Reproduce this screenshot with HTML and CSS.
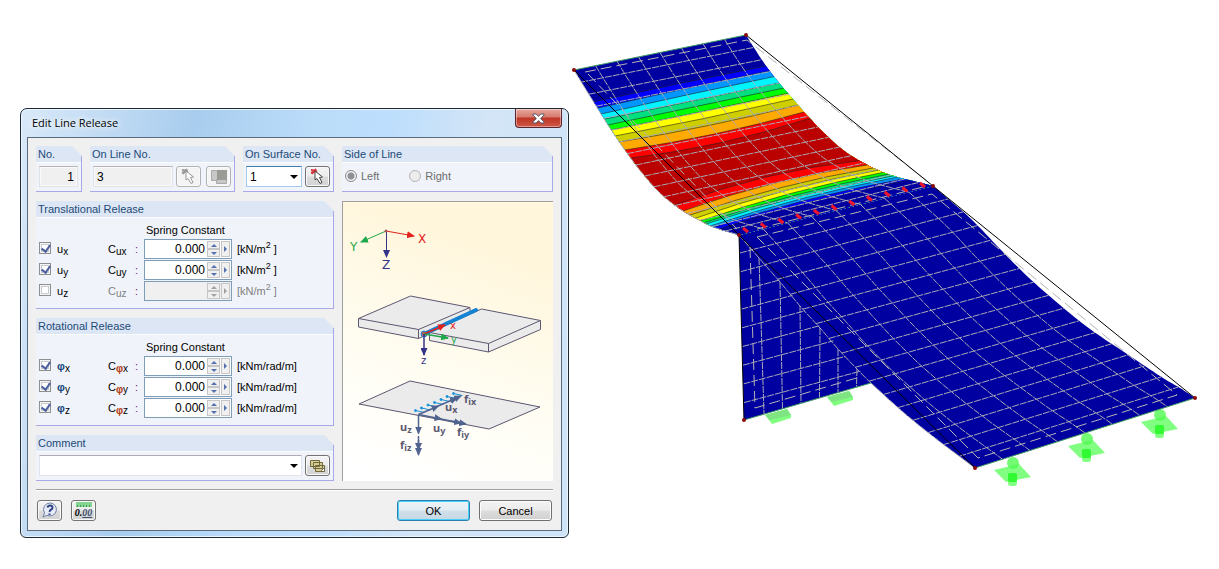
FILE: index.html
```html
<!DOCTYPE html>
<html lang="en">
<head>
    <meta charset="UTF-8">
    <meta name="viewport" content="width=device-width, initial-scale=1.0">
    <title>Edit Line Release</title>
    <link rel="stylesheet" href="styles.css">
</head>
<body>
    <main class="workspace">
        <section class="dialog">
            <header class="titlebar">
                <h1>Edit Line Release</h1>
                <button class="close-button" aria-label="Close">
                    <svg width="13" height="11" viewBox="0 0 13 11">
                        <path d="M1 1h3.200l2.300 2.400L8.800 1H12v1.200L8.600 5.500 12 8.800V10H8.800L6.500 7.600 4.200 10H1V8.800l3.400-3.300L1 2.200z" fill="#fff" stroke="#54586b"/>
                    </svg>
                </button>
            </header>

            <form class="client" onsubmit="return false">
                <div class="top-row">
                    <div class="panel">
                        <h2><label for="releaseNo">No.</label></h2>
                        <div class="panel-body fields">
                            <input class="text-field number" type="text" id="releaseNo" value="1" readonly>
                        </div>
                    </div>
                    <div class="panel">
                        <h2><label for="lineNo">On Line No.</label></h2>
                        <div class="panel-body fields">
                            <input class="text-field" type="text" id="lineNo" value="3" readonly>
                            <button class="icon-button" aria-label="Pick line" disabled>
                                <svg width="19" height="17" viewBox="0 0 19 17">
                                    <path d="M3 2l5 1M8 1L4 6M3 5l6-2" stroke="#999" stroke-width="2" fill="none"/>
                                    <path d="M7 3v9l2-1.500 3 5 2-1-2.500-5 3-.5z" fill="#fff" stroke="#999"/>
                                </svg>
                            </button>
                            <button class="icon-button spaced" aria-label="Line list" disabled>
                                <svg width="19" height="17" viewBox="0 0 19 17">
                                    <path d="M2.500 2.500h6v10h-6zM7.500 11.500h10v4h-10z" fill="#c8c8c8" stroke="#aaa"/>
                                    <path d="M8 2h10v10H8z" fill="#9b9b95"/>
                                </svg>
                            </button>
                        </div>
                    </div>
                    <div class="panel">
                        <h2><label for="surfaceNo">On Surface No.</label></h2>
                        <div class="panel-body fields">
                            <div class="drop-down focused">
                                <select id="surfaceNo"><option>1</option><option>2</option></select>
                            </div>
                            <button class="icon-button" aria-label="Pick surface">
                                <svg width="19" height="17" viewBox="0 0 19 17">
                                    <path d="M3 2l5 1M8 1L4 6M3 5l6-2" stroke="#d8363e" stroke-width="2" fill="none"/>
                                    <path d="M7 3v9l2-1.500 3 5 2-1-2.500-5 3-.5z" fill="#fff" stroke="#444"/>
                                </svg>
                            </button>
                        </div>
                    </div>
                    <div class="panel">
                        <h2>Side of Line</h2>
                        <div class="panel-body radios">
                            <label><input type="radio" name="side" checked disabled>Left</label>
                            <label><input type="radio" name="side" disabled>Right</label>
                        </div>
                    </div>
                </div>

                <div class="main-row">
                    <div class="settings">
                        <div class="panel release">
                            <h2>Translational Release</h2>
                            <div class="panel-body">
                                <p class="column-title">Spring Constant</p>
                                <div class="spring-row">
                                    <input type="checkbox" id="ux" checked>
                                    <label for="ux">u<sub>x</sub></label>
                                    <label for="cux">C<sub>ux</sub></label>
                                    <span class="colon">:</span>
                                    <div class="spinner">
                                        <input type="text" id="cux" value="0.000">
                                        <div class="steps"><button aria-label="Increase"></button><button aria-label="Decrease"></button></div>
                                        <button class="more" aria-label="More"></button>
                                    </div>
                                    <span class="unit">[kN/m<sup>2</sup> ]</span>
                                </div>
                                <div class="spring-row">
                                    <input type="checkbox" id="uy" checked>
                                    <label for="uy">u<sub>y</sub></label>
                                    <label for="cuy">C<sub>uy</sub></label>
                                    <span class="colon">:</span>
                                    <div class="spinner">
                                        <input type="text" id="cuy" value="0.000">
                                        <div class="steps"><button aria-label="Increase"></button><button aria-label="Decrease"></button></div>
                                        <button class="more" aria-label="More"></button>
                                    </div>
                                    <span class="unit">[kN/m<sup>2</sup> ]</span>
                                </div>
                                <div class="spring-row inactive">
                                    <input type="checkbox" id="uz">
                                    <label for="uz">u<sub>z</sub></label>
                                    <label for="cuz">C<sub>uz</sub></label>
                                    <span class="colon">:</span>
                                    <div class="spinner">
                                        <input type="text" id="cuz" disabled>
                                        <div class="steps"><button aria-label="Increase" disabled></button><button aria-label="Decrease" disabled></button></div>
                                        <button class="more" aria-label="More" disabled></button>
                                    </div>
                                    <span class="unit">[kN/m<sup>2</sup> ]</span>
                                </div>
                            </div>
                        </div>

                        <div class="panel release">
                            <h2>Rotational Release</h2>
                            <div class="panel-body">
                                <p class="column-title">Spring Constant</p>
                                <div class="spring-row">
                                    <input type="checkbox" id="phix" checked>
                                    <label for="phix"><span class="phi">φ</span><sub>x</sub></label>
                                    <label for="cphix">C<sub><span class="phi-sub">φ</span>x</sub></label>
                                    <span class="colon">:</span>
                                    <div class="spinner">
                                        <input type="text" id="cphix" value="0.000">
                                        <div class="steps"><button aria-label="Increase"></button><button aria-label="Decrease"></button></div>
                                        <button class="more" aria-label="More"></button>
                                    </div>
                                    <span class="unit">[kNm/rad/m]</span>
                                </div>
                                <div class="spring-row">
                                    <input type="checkbox" id="phiy" checked>
                                    <label for="phiy"><span class="phi">φ</span><sub>y</sub></label>
                                    <label for="cphiy">C<sub><span class="phi-sub">φ</span>y</sub></label>
                                    <span class="colon">:</span>
                                    <div class="spinner">
                                        <input type="text" id="cphiy" value="0.000">
                                        <div class="steps"><button aria-label="Increase"></button><button aria-label="Decrease"></button></div>
                                        <button class="more" aria-label="More"></button>
                                    </div>
                                    <span class="unit">[kNm/rad/m]</span>
                                </div>
                                <div class="spring-row">
                                    <input type="checkbox" id="phiz" checked>
                                    <label for="phiz"><span class="phi">φ</span><sub>z</sub></label>
                                    <label for="cphiz">C<sub><span class="phi-sub">φ</span>z</sub></label>
                                    <span class="colon">:</span>
                                    <div class="spinner">
                                        <input type="text" id="cphiz" value="0.000">
                                        <div class="steps"><button aria-label="Increase"></button><button aria-label="Decrease"></button></div>
                                        <button class="more" aria-label="More"></button>
                                    </div>
                                    <span class="unit">[kNm/rad/m]</span>
                                </div>
                            </div>
                        </div>

                        <div class="panel">
                            <h2><label for="comment">Comment</label></h2>
                            <div class="panel-body fields">
                                <div class="drop-down">
                                    <select id="comment"><option></option></select>
                                </div>
                                <button class="icon-button" aria-label="Comment library">
                                    <svg width="19" height="17" viewBox="0 0 19 17">
                                        <path d="M2.500 3.500h9v6h-9zM5.500 5.500h9v6h-9zM7.500 8.500h9v6h-9z" fill="#d6cb91" stroke="#6f683f"/>
                                        <path d="M12.500 14.500l4-4v4z" fill="#fff" stroke="#6f683f"/>
                                    </svg>
                                </button>
                            </div>
                        </div>
                    </div>

                    <!-- axis system and release sketch -->
                    <div class="sketch">
                        <svg viewBox="343 202 210 279">
                            <defs>
                                <marker id="red" viewBox="0 0 8 7" markerWidth="8" markerHeight="7" markerUnits="userSpaceOnUse" refX="7" refY="3.5" orient="auto"><path d="M0 0l8 3.500-8 3.500z" fill="#e2211c"/></marker>
                                <marker id="green" viewBox="0 0 8 7" markerWidth="8" markerHeight="7" markerUnits="userSpaceOnUse" refX="7" refY="3.5" orient="auto"><path d="M0 0l8 3.500-8 3.500z" fill="#1fa84b"/></marker>
                                <marker id="navy" viewBox="0 0 8 7" markerWidth="8" markerHeight="7" markerUnits="userSpaceOnUse" refX="7" refY="3.5" orient="auto"><path d="M0 0l8 3.500-8 3.500z" fill="#33338a"/></marker>
                                <marker id="slate" viewBox="0 0 8 7" markerWidth="8" markerHeight="7" markerUnits="userSpaceOnUse" refX="7" refY="3.5" orient="auto"><path d="M0 0l8 3.500-8 3.500z" fill="#50648f"/></marker>
                            </defs>
                            <g fill="none">
                                <path d="M386 231l28 5" stroke="#e2211c" marker-end="url(#red)"/>
                                <path d="M386 231l-25 11" stroke="#1fa84b" marker-end="url(#green)"/>
                                <path d="M386.500 231v26" stroke="#33338a" marker-end="url(#navy)"/>
                                <circle cx="386" cy="231" r="1.500" fill="#a55"/>
                            </g>
                            <g class="axis-text">
                                <text x="418" y="243" fill="#e2211c">X</text>
                                <text x="350" y="251" fill="#1fa84b">Y</text>
                                <text x="382" y="269" fill="#33338a">Z</text>
                            </g>
                            <g fill="#ebebeb" stroke="#5d5670" stroke-linejoin="round">
                                <path d="M358.500 318.500l52-22.500 59.500 11.500v8.500l-51.500 22.500-60-11.500z"/>
                                <path d="M358.500 318.500l60 11 51.500-22M418.500 329.500v9" fill="none"/>
                                <path d="M429.500 332.500l52-23.500 59 11.500v9l-52 22.500-59-11.500z"/>
                                <path d="M429.500 332.500l59 11 52-23M488.500 343.500v8.500" fill="none"/>
                            </g>
                            <path d="M424 334l52-24" stroke="#1583d2" stroke-width="4" stroke-linecap="round"/>
                            <circle cx="424" cy="334" r="3" fill="#a66" stroke="#1583d2"/>
                            <g fill="none" stroke-width="1.500">
                                <path d="M424 334l21-9" stroke="#e2211c" marker-end="url(#red)"/>
                                <path d="M424 334l24 4" stroke="#1fa84b" marker-end="url(#green)"/>
                                <path d="M424 334v21" stroke="#33338a" marker-end="url(#navy)"/>
                            </g>
                            <g class="local-text">
                                <text x="450" y="329" fill="#e2211c">x</text>
                                <text x="451" y="343" fill="#1fa84b">y</text>
                                <text x="421" y="364" fill="#33338a">z</text>
                            </g>
                            <path d="M359 404l51-23 130 26-51 22z" fill="#ebebeb" stroke="#5d5670"/>
                            <g fill="#1691d8" stroke="#1691d8">
                                <path d="M415.500 410.500l9 2M421.500 408l9 2M428 405l9 2M434.500 402.500l9 2M441 399.500l9 2M447 396.500l9 2M453.500 393.500l9 2"/>
                                <circle cx="415.500" cy="410.500" r="1"/><circle cx="421.500" cy="408" r="1"/><circle cx="428" cy="405" r="1"/><circle cx="434.500" cy="402.500" r="1"/><circle cx="441" cy="399.500" r="1"/><circle cx="447" cy="396.500" r="1"/><circle cx="453.500" cy="393.500" r="1"/>
                            </g>
                            <g fill="none" stroke="#50648f" stroke-width="1.500">
                                <path d="M418.500 414.500l20-8.500" marker-end="url(#slate)"/>
                                <path d="M438 406l19-8" marker-end="url(#slate)"/>
                                <path d="M450 401l11-5" marker-end="url(#slate)"/>
                                <path d="M418.500 414.500l23 4.500" marker-end="url(#slate)"/>
                                <path d="M441 419l20 4" marker-end="url(#slate)"/>
                                <path d="M450 421l16 3" marker-end="url(#slate)"/>
                                <path d="M418.500 414.500v19" marker-end="url(#slate)"/>
                                <path d="M418.500 436v14" marker-end="url(#slate)"/>
                                <path d="M418.500 440v15" marker-end="url(#slate)"/>
                            </g>
                            <g class="force-text">
                                <text x="445" y="411">u<tspan dy="2" class="index">x</tspan></text>
                                <text x="464" y="403">f<tspan dy="2" class="index">ix</tspan></text>
                                <text x="400" y="431">u<tspan dy="2" class="index">z</tspan></text>
                                <text x="433" y="432">u<tspan dy="2" class="index">y</tspan></text>
                                <text x="457" y="436">f<tspan dy="2" class="index">iy</tspan></text>
                                <text x="400" y="449">f<tspan dy="2" class="index">iz</tspan></text>
                            </g>
                        </svg>
                    </div>
                </div>

                <footer class="actions">
                    <button class="icon-button" aria-label="Help">
                        <svg width="19" height="17" viewBox="0 0 19 17">
                            <path d="M10 1a6.500 6.500 0 1 1-3 12.300L3 15l1.500-4A6.500 6.500 0 0 1 10 1z" fill="#e6ebf7" stroke="#7181a5"/>
                            <path d="M7.500 5.500q.5-2 2.700-2t2.300 2q0 1.300-1.500 2.200T9.700 10M9.500 11.500v1.500" fill="none" stroke="#2e4485" stroke-width="2"/>
                        </svg>
                    </button>
                    <button class="icon-button units" aria-label="Units and decimal places">
                        <span class="ruler"></span>
                        <span class="digits">0.<u>00</u></span>
                    </button>
                    <button class="push-button default">OK</button>
                    <button class="push-button">Cancel</button>
                </footer>
            </form>
        </section>

        <svg class="model" id="model" viewBox="569 20 650 480" role="img" aria-label="Deformed model">
            <g id="supports"></g>
            <g id="surfaces"></g>
            <g id="mesh" class="mesh"></g>
            <g class="inner-outline">
                <path d="M585 72L747 40L932 185"/>
                <path d="M588 74L737 229"/>
                <path d="M757 237L932 194L1177 395L978 458z"/>
                <path d="M750 247l5 161 105-31"/>
                <path d="M757 229l170-43"/>
            </g>
            <g class="system-lines">
                <path d="M574 70L739 235L975 468M739 235l5 185"/>
                <path d="M746 35L933 186L1195 398"/>
            </g>
            <path class="line-supports" d="M574 70L746 35M744 420l127-37M975 468l220-70"/>
            <g id="releases" class="releases"></g>
            <g id="nodes" class="nodes"></g>
        </svg>
    </main>

    <script src="model.js"></script>
</body>
</html>
```
FILE: styles.css
```css
* {
    box-sizing: border-box;
}

body {
    margin: 0;
    background: #fff;
    color: #000;
    font-family: "Liberation Sans", Arial, sans-serif;
    font-size: 11px;
    line-height: 16px;
}

h1, h2, p {
    margin: 0;
    font-size: 11px;
    font-weight: normal;
}

button, input, select {
    font: inherit;
    color: inherit;
    margin: 0;
    padding: 0;
}

.workspace {
    display: flex;
    align-items: flex-start;
}

/* Dialog window */
.dialog {
    flex: 0 0 549px;
    margin: 108px 0 0 20px;
    padding: 0 6px 6px;
    border: 1px solid #1e2a38;
    border-radius: 7px 7px 6px 6px;
    background: linear-gradient(100deg, #d9e9f9 0%, #a9cdee 28%, #bbddfa 48%, #bddefc 60%, #d3e5f7 75%, #cfe4f8 100%);
    box-shadow: inset 0 0 0 1px #eaf5ff;
}

.titlebar {
    display: flex;
    justify-content: space-between;
    align-items: flex-start;
    height: 28px;
}

.titlebar h1 {
    padding: 6px 0 0 5px;
    font-family: "Open Sans", sans-serif;
    text-shadow: 0 0 6px #fff, 0 0 6px #fff;
}

.close-button {
    display: flex;
    justify-content: center;
    align-items: center;
    width: 47px;
    height: 19px;
    border: 1px solid #5a2430;
    border-top: 0;
    border-radius: 0 0 4px 4px;
    background: linear-gradient(#e9aaa0 0%, #d5786c 45%, #be3424 50%, #cf5946 100%);
    box-shadow: inset 0 0 0 1px rgba(255, 255, 255, 0.4);
}

.client {
    padding: 8px;
    border: 1px solid #5a6b7d;
    background: #f0f0f0;
}

/* Group panels */
.panel {
    position: relative;
    min-width: 0;
    border-bottom: 1px solid #a9a9ea;
    background: #f0f4fa;
}

.panel::after {
    content: "";
    position: absolute;
    top: 10px;
    right: 0;
    bottom: 0;
    border-right: 1px solid #a9a9ea;
}

/* cut corner */
.panel::before {
    content: "";
    position: absolute;
    top: 0;
    right: 0;
    border: 5px solid #f0f0f0;
    border-left-color: transparent;
    border-bottom-color: transparent;
}

.panel h2 {
    height: 17px;
    padding: 0 2px;
    border-bottom: 1px solid #fafcff;
    background: #dce6f4;
    color: #1c4a78;
    white-space: nowrap;
}

.top-row {
    display: grid;
    grid-template-columns: 46px 145px 91px 1fr;
    gap: 8px;
}

.fields {
    display: flex;
    gap: 3px;
    padding: 3px 4px 4px 3px;
    height: 28px;
}

.text-field {
    flex: 1;
    min-width: 0;
    padding: 0 3px;
    border: 1px solid #e2e2e6;
    border-top-color: #b4b4b8;
    background: #f0f0f0;
    box-shadow: inset 0 0 0 1px #fafafa;
    font-size: 12px;
}

.number {
    text-align: right;
}

.icon-button {
    display: flex;
    justify-content: center;
    align-items: center;
    width: 25px;
    height: 21px;
    border: 1px solid #737373;
    border-radius: 3px;
    background: linear-gradient(#f4f4f4 0%, #ececec 48%, #dcdcdc 52%, #d2d2d2 100%);
    box-shadow: inset 0 0 0 1px #fafafa;
}

.icon-button:disabled {
    border-color: #b0b2b6;
    background: #f4f4f4;
}

.spaced {
    margin-left: 2px;
}

.drop-down {
    position: relative;
    flex: 1;
    min-width: 0;
}

.drop-down select {
    display: block;
    appearance: none;
    width: 100%;
    height: 21px;
    padding: 0 3px;
    border: 1px solid #e2e3ea;
    border-top-color: #abadb3;
    border-radius: 0;
    background: #fff;
    font-size: 12px;
}

.drop-down.focused select {
    border-color: #a5cbea;
    border-top-color: #3d7bad;
}

.drop-down::after {
    content: "";
    position: absolute;
    top: 9px;
    right: 4px;
    border: 4px solid transparent;
    border-top-color: #000;
    border-bottom: 0;
    pointer-events: none;
}

.radios {
    display: flex;
    gap: 30px;
    padding: 5px 3px;
    color: #6d6d6d;
}

.radios label {
    display: flex;
    align-items: center;
    gap: 4px;
}

.radios input {
    appearance: none;
    width: 12px;
    height: 12px;
    border: 1px solid #b5b5b5;
    border-radius: 50%;
    background: #ececec;
}

.radios input:checked {
    border-color: #8b8b8b;
    background: radial-gradient(circle, #8f8f98 0 3px, #f2f2f2 4px);
}

.main-row {
    display: grid;
    grid-template-columns: 298px 1fr;
    gap: 8px;
    margin-top: 9px;
}

.settings {
    display: flex;
    flex-direction: column;
    gap: 9px;
}

.release .panel-body {
    padding: 4px 3px 6px;
}

.column-title {
    padding-left: 107px;
    height: 17px;
}

/* One spring constant per row */
.spring-row {
    display: grid;
    grid-template-columns: 18px 51px 27px 9px 88px 1fr;
    height: 21px;
    line-height: 20px;
    white-space: nowrap;
}

.spring-row label {
    height: 20px;
}

.spring-row sub {
    position: relative;
    top: 2px;
    vertical-align: baseline;
    line-height: 0;
    font-size: 10px;
}

.spring-row sup {
    line-height: 0;
    font-size: 9px;
}

.spring-row input[type="checkbox"] {
    appearance: none;
    width: 12px;
    height: 12px;
    margin-top: 3px;
    border: 1px solid #8e8f8f;
    background: #fff;
    box-shadow: inset 0 0 0 1px #f4f4f4, inset 0 0 0 2px #c8ccd0;
}

.spring-row input[type="checkbox"]:checked::after {
    content: "";
    display: block;
    width: 4px;
    height: 7px;
    margin: 0 0 0 3px;
    border: solid #4a5f9e;
    border-width: 0 2px 2px 0;
    transform: rotate(35deg);
}

.phi {
    color: #17477c;
    font-weight: bold;
}

.phi-sub {
    color: #b23c12;
    font-weight: bold;
}

.colon {
    color: #702070;
}

.spinner {
    display: flex;
    height: 20px;
    border: 1px solid #7f9db9;
    background: #fff;
}

.spinner input {
    flex: 1;
    min-width: 0;
    border: 0;
    background: transparent;
    text-align: right;
    font-size: 12px;
    padding-right: 1px;
}

.steps {
    display: flex;
    flex-direction: column;
    width: 13px;
    margin: 1px;
}

.steps button,
.more {
    display: flex;
    justify-content: center;
    align-items: center;
    flex: 1;
    border: 1px solid #c6c6c6;
    background: #f0f0f0;
}

.more {
    flex: 0 0 9px;
    margin: 1px 1px 1px 0;
}

.steps button::after,
.more::after {
    content: "";
    border: 3px solid transparent;
    border-bottom-color: #5470ad;
    border-top: 0;
}

.steps button:last-child::after {
    border-top: 3px solid #5470ad;
    border-bottom: 0;
}

.more::after {
    border: 3px solid transparent;
    border-left-color: #5470ad;
    border-right: 0;
}

.unit {
    padding-left: 5px;
}

.inactive .spinner {
    background: #f0f0f0;
}

.inactive label + label,
.inactive .unit {
    color: #808080;
}

.inactive .spinner button::after {
    opacity: 0.6;
    filter: grayscale(1);
}

/* Sketch panel */
.sketch {
    border: solid #a0a0a0;
    border-width: 1px 0 0 1px;
    background: linear-gradient(20deg, #fff 5%, #fffdf2 40%, #fff6dc 80%);
}

.sketch svg {
    display: block;
    width: 100%;
}

.axis-text {
    font-family: "DejaVu Sans", sans-serif;
    font-size: 12px;
}

.local-text {
    font-family: "DejaVu Sans", sans-serif;
    font-size: 10px;
}

.force-text {
    font-family: "Noto Sans", sans-serif;
    font-size: 11px;
    font-weight: bold;
    fill: #5b5870;
}

.index {
    font-size: 9px;
}

.actions {
    display: flex;
    gap: 9px;
    margin-top: 8px;
    padding: 10px 1px 1px;
    border-top: 1px solid #a0a0a0;
    box-shadow: inset 0 1px #fff;
}

.units {
    flex-direction: column;
}

.ruler {
    width: 16px;
    height: 5px;
    background: repeating-linear-gradient(90deg, #43a15c 0 1px, transparent 1px 3px) center 3px / 14px 2px no-repeat, #85d490;
}

.digits {
    height: 12px;
    line-height: 12px;
    font-family: "Liberation Serif", serif;
    font-size: 10px;
    font-style: italic;
    font-weight: bold;
}

.digits u {
    color: #3c5070;
}

.push-button {
    width: 73px;
    height: 21px;
    border: 1px solid #707070;
    border-radius: 3px;
    background: linear-gradient(#f3f3f3 0%, #ebebeb 48%, #dddddd 52%, #cfcfcf 100%);
    box-shadow: inset 0 0 0 1px #fcfcfc;
    font-size: 11px;
}

.default {
    margin-left: auto;
    border-color: #2c7fae;
    background: linear-gradient(#eef4f8 0%, #e2edf3 48%, #d1e0e9 52%, #c5d8e4 100%);
    box-shadow: inset 0 0 0 1px #48d1f8;
}

/* Model view */
.model {
    flex: 1;
    min-width: 0;
    margin-top: 20px;
}

.model path {
    fill: none;
}

.model .fill {
    fill: #0000a0;
}

.mesh {
    stroke: #a9a9b4;
    stroke-width: 1;
    stroke-dasharray: 7 1;
}

.inner-outline {
    stroke: #b4b4b4;
    stroke-width: 1;
    stroke-dasharray: 11 5;
}

.system-lines {
    stroke: #000;
    stroke-width: 1;
}

.line-supports {
    stroke: #3f9c62;
    stroke-width: 1;
}

.releases {
    stroke: #f0142d;
    stroke-width: 3;
}

.nodes {
    fill: #8a0a0a;
}
```
FILE: model.js
```js
const SVG_NS = 'http://www.w3.org/2000/svg';

// edges of the deformed surfaces
const roofLeft = [[574, 70], [593, 101], [610, 128], [627, 153], [643, 174], [660, 193], [680, 209], [697, 219], [713, 227], [739, 235]];
const roofRight = [[746, 35], [758, 54], [769, 70], [780, 84], [792, 98], [806, 114], [823, 132], [843, 150], [862, 162], [880, 171], [897, 177], [917, 182], [933, 186]];
const rampLeft = [[739, 235], [759, 258], [780, 282], [800, 306], [820, 328], [838, 349], [857, 369], [871, 383], [903, 412], [935, 438], [975, 468]];
const rampRight = [[933, 186], [970, 218], [1000, 249], [1028, 277], [1060, 305], [1090, 329], [1133, 358], [1163, 378], [1180, 388], [1195, 398]];

// colour below the line, left end, right end, bow upwards
const bands = [
    ['#0000ff', [593, 102], [766, 66], 1],
    ['#0096ff', [598, 108], [769, 71], 1],
    ['#00f5ff', [601, 114], [772, 77], 1],
    ['#00e080', [605, 119], [779, 83], 0],
    ['#00ff00', [608, 125], [784, 88], 0],
    ['#ffff00', [611, 130], [789, 93], -1],
    ['#cfcf00', [615, 136], [793, 99], -2],
    ['#ffaa00', [619, 142], [798, 105], -4],
    ['#ff0000', [625, 150], [804, 112], -6],
    ['#bb0000', [631, 158], [808, 119], -9],
    ['#ff0000', [675, 205], [857, 161], 12],
    ['#ffaa00', [683, 211], [867, 165], 10],
    ['#cfcf00', [690, 215], [873, 168], 8],
    ['#ffff00', [696, 218], [879, 170], 8],
    ['#00ff00', [700, 221], [885, 172], 7],
    ['#00e080', [703, 223], [889, 174], 7],
    ['#00f5ff', [706, 224], [893, 176], 7],
    ['#0096ff', [710, 226], [898, 177], 7],
    ['#0000ff', [714, 227], [903, 179], 7],
    ['#0000a0', [719, 229], [909, 180], 7]
];

function add(parent, tag, attrs) {
    const el = document.createElementNS(SVG_NS, tag);
    for (const key in attrs) {
        el.setAttribute(key, attrs[key]);
    }
    parent.appendChild(el);
    return el;
}

// Catmull-Rom through the points, returns a dense polyline
function smooth(points) {
    const out = [];
    for (let i = 0; i < points.length - 1; i++) {
        const p0 = points[Math.max(i - 1, 0)];
        const p1 = points[i];
        const p2 = points[i + 1];
        const p3 = points[Math.min(i + 2, points.length - 1)];
        for (let k = 0; k < 8; k++) {
            const t = k / 8;
            out.push([0, 1].map(a => 0.5 * (2 * p1[a] + (p2[a] - p0[a]) * t
                + (2 * p0[a] - 5 * p1[a] + 4 * p2[a] - p3[a]) * t * t
                + (3 * p1[a] - p0[a] - 3 * p2[a] + p3[a]) * t * t * t)));
        }
    }
    out.push(points[points.length - 1]);
    return out;
}

function pointAt(line, t) {
    const lengths = [0];
    for (let i = 1; i < line.length; i++) {
        lengths.push(lengths[i - 1] + Math.hypot(line[i][0] - line[i - 1][0], line[i][1] - line[i - 1][1]));
    }
    const target = t * lengths[lengths.length - 1];
    let i = 1;
    while (i < line.length - 1 && lengths[i] < target) i++;
    const f = (target - lengths[i - 1]) / (lengths[i] - lengths[i - 1]);
    return [0, 1].map(a => line[i - 1][a] + (line[i][a] - line[i - 1][a]) * f);
}

function toPath(points) {
    return 'M' + points.map(p => p[0].toFixed(1) + ' ' + p[1].toFixed(1)).join('L');
}

function drawMesh(left, right, rows, columns) {
    const mesh = document.getElementById('mesh');
    for (let r = 1; r < rows; r++) {
        add(mesh, 'path', { d: toPath([pointAt(left, r / rows), pointAt(right, r / rows)]) });
    }
    for (let c = 0; c < columns; c++) {
        const line = [];
        for (let k = 0; k <= 40; k++) {
            const a = pointAt(left, k / 40);
            const b = pointAt(right, k / 40);
            line.push([a[0] + (b[0] - a[0]) * c / columns, a[1] + (b[1] - a[1]) * c / columns]);
        }
        add(mesh, 'path', { d: toPath(line) });
    }
}

const surfaces = document.getElementById('surfaces');
const rl = smooth(roofLeft);
const rr = smooth(roofRight);
const pl = smooth(rampLeft);
const pr = smooth(rampRight);
const roofOutline = toPath(rl.concat(rr.slice().reverse())) + 'Z';

// supports
const supports = document.getElementById('supports');
[[765, 415], [827, 397]].forEach(([x, y]) => {
    add(supports, 'polygon', { points: `${x},${y} ${x + 22},${y - 6} ${x + 26},${y} ${x + 26},${y + 3} ${x + 7},${y + 9}`, fill: '#80ff80' });
    add(supports, 'polygon', { points: `${x},${y} ${x + 22},${y - 6} ${x + 26},${y} ${x + 5},${y + 5}`, fill: '#7fe482' });
});
[[1013, 461], [1087, 437], [1160, 413]].forEach(([x, y]) => {
    add(supports, 'polygon', { points: `${x - 19},${y + 9} ${x + 6},${y + 3} ${x + 18},${y + 16} ${x - 7},${y + 21}`, fill: '#80ff80' });
    add(supports, 'circle', { cx: x, cy: y + 2, r: 6, fill: '#50fa50', opacity: 0.8 });
    add(supports, 'rect', { x: x - 5, y: y + 13, width: 9, height: 12, rx: 3, fill: '#80ff80' });
    add(supports, 'rect', { x: x - 5, y: y + 12, width: 9, height: 9, rx: 2, fill: '#32fa32' });
});

// wall, ramp and roof
add(surfaces, 'path', { class: 'fill', d: 'M739 235L744 420L871 383L860 340Z' });
add(surfaces, 'path', { class: 'fill', d: toPath(pl.concat(pr.slice().reverse())) + 'Z' });
add(surfaces, 'path', { class: 'fill', d: roofOutline });

const clip = add(surfaces, 'clipPath', { id: 'roofClip' });
add(clip, 'path', { d: roofOutline });
const roof = add(surfaces, 'g', { 'clip-path': 'url(#roofClip)' });
bands.forEach(([color, a, b, bow]) => {
    const mx = (a[0] + b[0]) / 2;
    const my = (a[1] + b[1]) / 2 - bow;
    const curve = `M${a[0] - 40} ${a[1] + 10}L${a[0]} ${a[1]}Q${mx} ${my} ${b[0]} ${b[1]}L${b[0] + 200} ${b[1] - 40}`;
    add(roof, 'path', { d: curve + 'V300H530Z', style: `fill: ${color}` });
    add(roof, 'path', { d: curve, stroke: '#222', 'stroke-width': 0.6 });
});

drawMesh(rl, rr, 17, 8);
drawMesh(pl, pr, 17, 8);

// wall mesh
const mesh = document.getElementById('mesh');
const wallTops = [[759, 258], [780, 282], [800, 306], [820, 328], [838, 349], [857, 369]];
wallTops.forEach(([x, y], i) => {
    add(mesh, 'path', { d: `M${x} ${y}L${764 + i * 18.5} ${414 - i * 5.5}` });
});
for (let i = 0; i < 9; i++) {
    const left = 740 + i * 0.5;
    const start = 253 + i * 18.7;
    // stop each row where it meets the ramp edge
    const hit = pl.find(p => p[1] >= start - (p[0] - left) * 0.27);
    add(mesh, 'path', { d: `M${left} ${start}L${hit[0]} ${start - (hit[0] - left) * 0.27}` });
}

// line release marks
const releases = document.getElementById('releases');
for (let i = 0; i < 11; i++) {
    const x = 743 + i * 17.7;
    const y = 228 - i * 4.5;
    add(releases, 'path', { d: `M${x} ${y}l5 4` });
}

const nodes = document.getElementById('nodes');
[[574, 70], [746, 35], [739, 235], [933, 186], [744, 420], [975, 468], [1195, 398]].forEach(([x, y]) => {
    add(nodes, 'circle', { cx: x, cy: y, r: 2 });
});
```
